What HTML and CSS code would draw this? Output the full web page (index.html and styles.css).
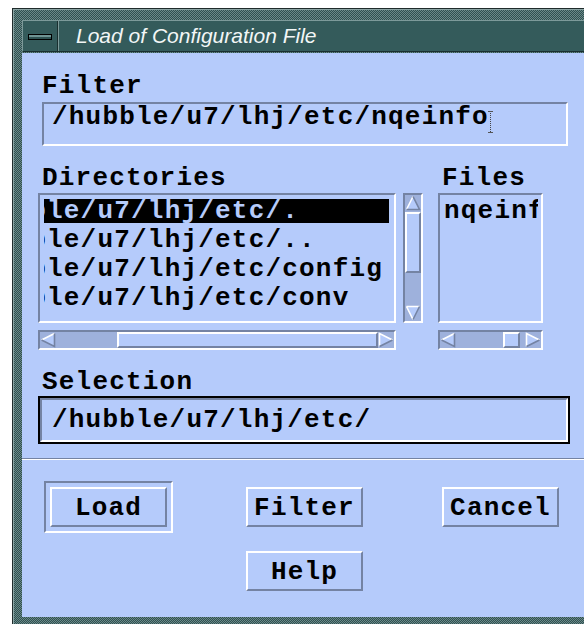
FILE: index.html
```html
<!DOCTYPE html>
<html>
<head>
<meta charset="utf-8">
<title>Load of Configuration File</title>
<link rel="stylesheet" href="styles.css">
</head>
<body>
<div class="window">
  <div class="titlebar">
    <div class="menu-btn"><span class="menu-bar"></span></div>
    <div class="title">Load of Configuration File</div>
  </div>
  <div class="content">
    <div class="form">
      <div class="label">Filter</div>
      <div class="field filter-field"><span class="field-text">/hubble/u7/lhj/etc/nqeinfo</span><span class="ibeam"></span></div>

      <div class="lists">
        <div class="label">Directories</div>
        <div class="label">Files</div>

        <div class="dir-row">
          <div class="listbox dir-box">
            <div class="item selected"><span class="scrolled">/hubble/u7/lhj/etc/.</span></div>
            <div class="item"><span class="scrolled">/hubble/u7/lhj/etc/..</span></div>
            <div class="item"><span class="scrolled">/hubble/u7/lhj/etc/config</span></div>
            <div class="item"><span class="scrolled">/hubble/u7/lhj/etc/conv</span></div>
          </div>
          <div class="vscroll">
            <svg class="arrow" width="16" height="16" viewBox="0 0 16 16"><polygon points="8,1.5 14.5,14.5 1.5,14.5" fill="#b5cbfb"/><path d="M8 1.5 L1.5 14.5" stroke="#fff" stroke-width="1.6"/><path d="M8 1.5 L14.5 14.5 L1.5 14.5" stroke="#7483a3" stroke-width="1.6" fill="none"/></svg>
            <div class="thumb v-thumb"></div>
            <div class="trough"></div>
            <svg class="arrow" width="16" height="16" viewBox="0 0 16 16"><polygon points="1.5,1.5 14.5,1.5 8,14.5" fill="#b5cbfb"/><path d="M1.5 1.5 L14.5 1.5 M1.5 1.5 L8 14.5" stroke="#fff" stroke-width="1.6" fill="none"/><path d="M14.5 1.5 L8 14.5" stroke="#7483a3" stroke-width="1.6"/></svg>
          </div>
        </div>

        <div class="listbox file-box">
          <div class="item"><span>nqeinfo</span></div>
        </div>

        <div class="hscroll dir-hscroll">
          <svg class="arrow" width="16" height="16" viewBox="0 0 16 16"><polygon points="1.5,8 14.5,1.5 14.5,14.5" fill="#b5cbfb"/><path d="M1.5 8 L14.5 1.5" stroke="#fff" stroke-width="1.6"/><path d="M14.5 1.5 L14.5 14.5 L1.5 8" stroke="#7483a3" stroke-width="1.6" fill="none"/></svg>
          <div class="trough dir-lead"></div>
          <div class="thumb dir-thumb"></div>
          <svg class="arrow" width="16" height="16" viewBox="0 0 16 16"><polygon points="1.5,1.5 14.5,8 1.5,14.5" fill="#b5cbfb"/><path d="M1.5 14.5 L1.5 1.5 L14.5 8" stroke="#fff" stroke-width="1.6" fill="none"/><path d="M14.5 8 L1.5 14.5" stroke="#7483a3" stroke-width="1.6"/></svg>
        </div>

        <div class="hscroll file-hscroll">
          <svg class="arrow" width="16" height="16" viewBox="0 0 16 16"><polygon points="1.5,8 14.5,1.5 14.5,14.5" fill="#b5cbfb"/><path d="M1.5 8 L14.5 1.5" stroke="#fff" stroke-width="1.6"/><path d="M14.5 1.5 L14.5 14.5 L1.5 8" stroke="#7483a3" stroke-width="1.6" fill="none"/></svg>
          <div class="trough file-lead"></div>
          <div class="thumb file-thumb"></div>
          <div class="trough"></div>
          <svg class="arrow" width="16" height="16" viewBox="0 0 16 16"><polygon points="1.5,1.5 14.5,8 1.5,14.5" fill="#b5cbfb"/><path d="M1.5 14.5 L1.5 1.5 L14.5 8" stroke="#fff" stroke-width="1.6" fill="none"/><path d="M14.5 8 L1.5 14.5" stroke="#7483a3" stroke-width="1.6"/></svg>
        </div>
      </div>

      <div class="label selection-label">Selection</div>
      <div class="sel-focus">
        <div class="field sel-field"><span class="field-text">/hubble/u7/lhj/etc/</span></div>
      </div>
    </div>

    <div class="separator"></div>

    <div class="buttons">
      <div class="default-frame"><div class="btn">Load</div></div>
      <div class="btn btn-filter">Filter</div>
      <div class="btn btn-cancel">Cancel</div>
      <div class="btn btn-help">Help</div>
    </div>
  </div>
</div>
</body>
</html>
```
FILE: styles.css
```css
html, body {
  margin: 0;
  padding: 0;
  background: #ffffff;
  width: 584px;
  height: 624px;
  overflow: hidden;
}

/* ---------- window frame ---------- */
.window {
  margin: 8px 0 0 12px;
  width: 562px;
  border: 1px solid #1f2b2b;
  border-right: 0;
  padding: 11px 0 8px 9px;
  background-color: #4f7070;
  background-image: repeating-conic-gradient(#2f5050 0 25%, #6a8888 0 50%);
  background-size: 2px 2px;
  box-shadow: inset 1px 0 0 #8aa4a4, inset 0 1px 0 #8aa4a4;
}

.titlebar {
  display: flex;
  height: 32px;
  box-sizing: border-box;
  background: #345b5b;
  border-top: 1px solid #7d9a9a;
  border-bottom: 1px solid #1a3030;
  border-left: 1px solid #7d9a9a;
}

.menu-btn {
  width: 34px;
  display: flex;
  align-items: center;
  border-right: 1px solid #1a3030;
  box-shadow: 1px 0 0 #7d9a9a;
}

.menu-bar {
  display: block;
  width: 22px;
  height: 4px;
  margin: 1px 0 0 5px;
  border: 1px solid #000;
  background: linear-gradient(#6f9494 0 50%, #2e5252 50% 100%);
}

.title {
  padding-left: 18px;
  font-family: "Liberation Sans", Arial, sans-serif;
  font-style: italic;
  font-size: 21px;
  line-height: 29px;
  color: #f2f6f6;
  white-space: nowrap;
}

/* ---------- dialog body ---------- */
.content {
  margin-top: 1px;
  background: #b5cbfb;
  padding-bottom: 26px;
  font-family: "Liberation Mono", "DejaVu Sans Mono", monospace;
  font-weight: bold;
  font-size: 26px;
  letter-spacing: 1.2px;
  color: #000;
}

.form {
  padding: 21px 0 0 16px;
}

.label {
  height: 24px;
  line-height: 24px;
  margin-left: 4px;
  white-space: nowrap;
}

.field {
  box-sizing: border-box;
  border-style: solid;
  border-color: #7483a3 #ffffff #ffffff #7483a3;
  white-space: nowrap;
  overflow: hidden;
  line-height: 24px;
}

.filter-field {
  margin: 4px 0 0 4px;
  width: 526px;
  height: 44px;
  border-width: 2px;
  padding: 1px 0 0 8px;
  display: flex;
  align-items: flex-start;
}

.ibeam {
  width: 5px;
  height: 22px;
  margin: 6px 0 0 -1px;
  background:
    linear-gradient(#555, #555) 0 0 / 5px 1px no-repeat,
    linear-gradient(#555, #555) 0 100% / 5px 1px no-repeat,
    repeating-linear-gradient(#444 0 1px, transparent 1px 2px) 2px 0 / 1px 100% no-repeat;
}

/* ---------- lists ---------- */
.lists {
  display: grid;
  grid-template-columns: 385px 105px;
  column-gap: 15px;
  margin-top: 20px;
}

.dir-row {
  display: flex;
  gap: 7px;
  margin-top: 3px;
}

.listbox {
  box-sizing: border-box;
  height: 130px;
  border: 2px solid;
  border-color: #7483a3 #ffffff #ffffff #7483a3;
  padding: 4px 5px 0 4px;
}

.file-box {
  margin-top: 3px;
  padding-right: 3px;
}

.dir-box {
  width: 358px;
}

.item {
  height: 24px;
  line-height: 24px;
  margin-bottom: 5px;
  overflow: hidden;
  white-space: nowrap;
}

.item .scrolled {
  display: inline-block;
  margin-left: -81px;
}

.item.selected {
  background: #000;
  color: #b5cbfb;
}

/* ---------- scrollbars ---------- */
.vscroll, .hscroll {
  box-sizing: border-box;
  border: 2px solid;
  border-color: #7483a3 #ffffff #ffffff #7483a3;
  background: #9eb1dc;
  display: flex;
}

.vscroll {
  width: 20px;
  height: 130px;
  flex-direction: column;
}

.hscroll {
  height: 20px;
  margin-top: 7px;
}

.dir-hscroll {
  width: 358px;
}

.arrow {
  display: block;
  flex: none;
}

.trough {
  flex: 1;
}

.thumb {
  box-sizing: border-box;
  background: #b5cbfb;
  border: 2px solid;
  border-color: #ffffff #7483a3 #7483a3 #ffffff;
  flex: none;
}

.v-thumb {
  height: 61px;
  margin-top: 1px;
}

.dir-lead {
  flex: none;
  width: 61px;
}

.dir-thumb {
  width: 261px;
}

.file-lead {
  flex: none;
  width: 47px;
}

.file-thumb {
  width: 17px;
}

/* ---------- selection ---------- */
.selection-label {
  margin-top: 20px;
}

.sel-focus {
  margin-top: 2px;
  width: 532px;
  height: 48px;
  box-sizing: border-box;
  border: 2px solid #000;
}

.sel-field {
  height: 44px;
  border-width: 2px;
  padding: 8px 0 0 10px;
}

.separator {
  margin-top: 14px;
  height: 1px;
  background: #7483a3;
  border-bottom: 1px solid #ffffff;
}

/* ---------- push buttons ---------- */
.buttons {
  display: grid;
  grid-template-columns: 129px 117px 117px;
  grid-template-rows: 52px 40px;
  row-gap: 18px;
  align-items: center;
  padding: 21px 0 0 22px;
}

.btn {
  box-sizing: border-box;
  width: 117px;
  height: 40px;
  border: 2px solid;
  border-color: #ffffff #7483a3 #7483a3 #ffffff;
  text-align: center;
  line-height: 36px;
  padding-top: 1px;
  white-space: nowrap;
}

.default-frame {
  box-sizing: border-box;
  width: 129px;
  height: 52px;
  border: 2px solid;
  border-color: #7483a3 #ffffff #ffffff #7483a3;
  padding: 4px;
}

.btn-filter {
  margin-left: 73px;
}

.btn-cancel {
  margin-left: 152px;
}

.btn-help {
  grid-column: 2;
  grid-row: 2;
  margin-left: 73px;
}
```
